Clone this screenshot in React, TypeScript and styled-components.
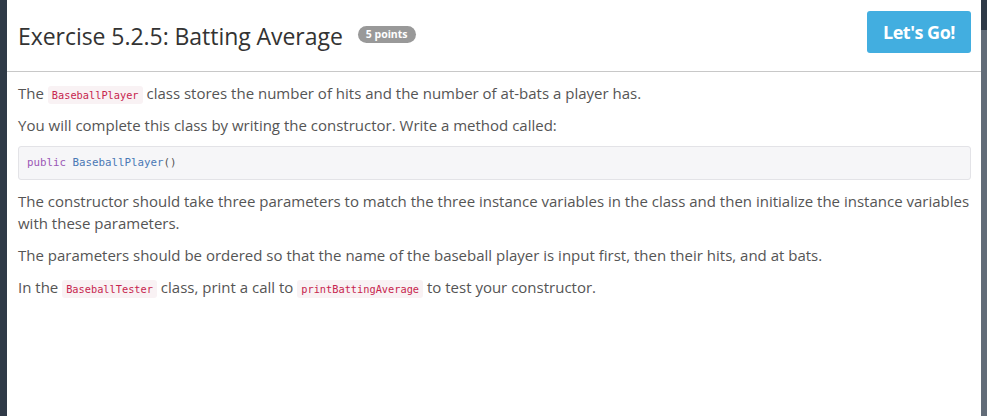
import React from "react";
import styled, { createGlobalStyle } from "styled-components";

const Global = createGlobalStyle`
  html, body { margin: 0; padding: 0; }
  body { font-family: "Open Sans", "Liberation Sans", sans-serif; }
`;

const Backdrop = styled.div`
  width: 987px;
  height: 416px;
  overflow: hidden;
  display: flex;
  justify-content: center;
  background:
    linear-gradient(to right, #2f3a47 0 7px, transparent 7px),
    linear-gradient(to bottom, #2f3a47 0 20px, #5f6a76 20px);
  position: relative;
`;

const RightStrip = styled.div`
  position: absolute;
  right: 0;
  top: 0;
  width: 6px;
  height: 100%;
  background: linear-gradient(to bottom, #2f3a47 0 30px, #626c78 30px);
`;

const Modal = styled.div`
  width: 974px;
  margin-left: 1px;
  background: #fff;
  display: flex;
  flex-direction: column;
`;

const Header = styled.div`
  height: 72px;
  box-sizing: border-box;
  border-bottom: 1px solid #c8c8c8;
  display: flex;
  align-items: center;
  justify-content: space-between;
  padding: 0 10px 0 11px;
`;

const TitleGroup = styled.div`
  display: flex;
  align-items: center;
  gap: 15px;
  padding-top: 1px;
`;

const Title = styled.h1`
  margin: 0;
  font-size: 23px;
  font-weight: 400;
  color: #333;
  letter-spacing: -0.05px;
`;

const Badge = styled.span`
  background: #999;
  color: #fff;
  font-size: 10.5px;
  font-weight: 700;
  border-radius: 9px;
  padding: 2px 8px 3px;
  line-height: 12px;
  margin-top: -4px;
  letter-spacing: 0;
`;

const GoButton = styled.button`
  background: #42aee0;
  color: #fff;
  border: none;
  border-radius: 3px;
  width: 104px;
  height: 42px;
  font-family: "Open Sans", "Liberation Sans", sans-serif;
  font-size: 18px;
  font-weight: 700;
  margin-top: -8px;
  letter-spacing: -0.5px;
  cursor: pointer;
`;

const Body = styled.div`
  padding: 10px 10px 0 11px;
  color: #555;
  font-size: 15px;
  line-height: 22px;
`;

const Para = styled.p`
  margin: 0 0 10px;
`;

const InlineCode = styled.code`
  font-family: "DejaVu Sans Mono", "Liberation Mono", monospace;
  font-size: 10.3px;
  line-height: 1;
  color: #c7254e;
  background: #f9f2f4;
  border-radius: 3px;
  padding: 3px 4px;
`;

const CodeBlock = styled.pre`
  margin: 0 0 10px;
  background: #f6f6f8;
  border: 1px solid #e3e3e7;
  border-radius: 3px;
  padding: 9px 8px;
  font-family: "DejaVu Sans Mono", "Liberation Mono", monospace;
  font-size: 10.8px;
  line-height: 14px;
  color: #333;
`;

const Token = styled.span<{ $tone: "kw" | "ident" | "plain" }>`
  color: ${(p) => (p.$tone === "kw" ? "#9b59b6" : p.$tone === "ident" ? "#4a78b5" : "#555")};
`;

export default function App() {
  return (
    <>
      <Global />
      <Backdrop>
        <Modal>
          <Header>
            <TitleGroup>
              <Title>Exercise 5.2.5: Batting Average</Title>
              <Badge>5 points</Badge>
            </TitleGroup>
            <GoButton>Let's Go!</GoButton>
          </Header>
          <Body>
            <Para>
              The <InlineCode>BaseballPlayer</InlineCode> class stores the number of hits and the
              number of at-bats a player has.
            </Para>
            <Para>You will complete this class by writing the constructor. Write a method called:</Para>
            <CodeBlock>
              <Token $tone="kw">public</Token> <Token $tone="ident">BaseballPlayer</Token>
              <Token $tone="plain">()</Token>
            </CodeBlock>
            <Para>
              The constructor should take three parameters to match the three instance variables in
              the class and then initialize the instance variables with these parameters.
            </Para>
            <Para>
              The parameters should be ordered so that the name of the baseball player is input
              first, then their hits, and at bats.
            </Para>
            <Para>
              In the <InlineCode>BaseballTester</InlineCode> class, print a call to{" "}
              <InlineCode>printBattingAverage</InlineCode> to test your constructor.
            </Para>
          </Body>
        </Modal>
        <RightStrip />
      </Backdrop>
    </>
  );
}
